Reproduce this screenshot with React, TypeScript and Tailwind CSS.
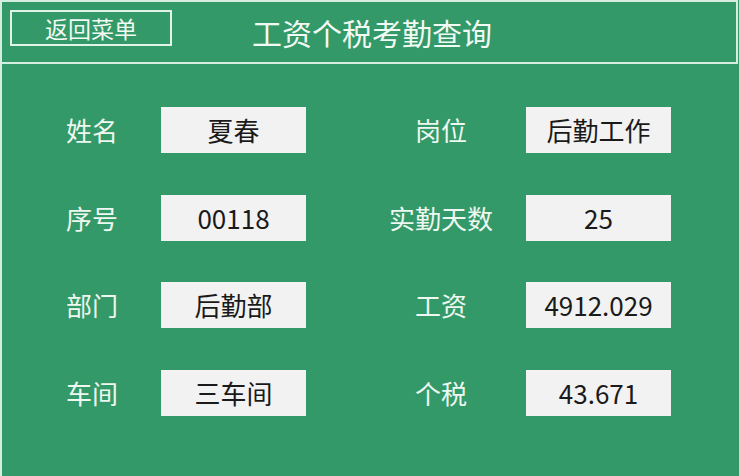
import React, { FC } from 'react';

type Field = { label: string; value: string };

const rows: [Field, Field][] = [
  [
    { label: '姓名', value: '夏春' },
    { label: '岗位', value: '后勤工作' },
  ],
  [
    { label: '序号', value: '00118' },
    { label: '实勤天数', value: '25' },
  ],
  [
    { label: '部门', value: '后勤部' },
    { label: '工资', value: '4912.029' },
  ],
  [
    { label: '车间', value: '三车间' },
    { label: '个税', value: '43.671' },
  ],
];

const font = { fontFamily: '"Microsoft YaHei", "Noto Sans CJK SC", "Noto Sans", sans-serif' };

const ValueBox: FC<{ value: string }> = ({ value }) => (
  <div className="w-[145px] h-[46px] bg-[#f2f2f2] flex items-center justify-center text-[26px] text-[#1a1a1a] leading-none">
    {value}
  </div>
);

const App: FC = () => {
  return (
    <div className="w-[739px] h-[476px] bg-[#339968] overflow-hidden" style={font}>
      <div className="h-[64px] w-[738px] border-2 border-[#d6eedf] flex items-center">
        <button className="self-start mt-[8px] ml-[8px] w-[162px] h-[36px] border-2 border-[#e2f3e8] text-[23px] text-[#f2faf4] leading-none flex items-center justify-center">
          返回菜单
        </button>
        <h1 className="ml-[80px] text-[30px] text-[#f2faf4] leading-none font-normal">工资个税考勤查询</h1>
      </div>

      <div className="h-[412px] border-l-2 border-[#d6eedf] pt-[43px] flex flex-col gap-[41.5px]">
        {rows.map(([left, right]) => (
          <div key={left.label} className="flex items-center">
            <div className="ml-[38px] w-[104px] text-center text-[26px] text-[#eef7f0] leading-none">{left.label}</div>
            <div className="ml-[17px]">
              <ValueBox value={left.value} />
            </div>
            <div className="ml-[70px] w-[130px] text-center text-[26px] text-[#eef7f0] leading-none">{right.label}</div>
            <div className="ml-[20px]">
              <ValueBox value={right.value} />
            </div>
          </div>
        ))}
      </div>
    </div>
  );
};

export default App;
